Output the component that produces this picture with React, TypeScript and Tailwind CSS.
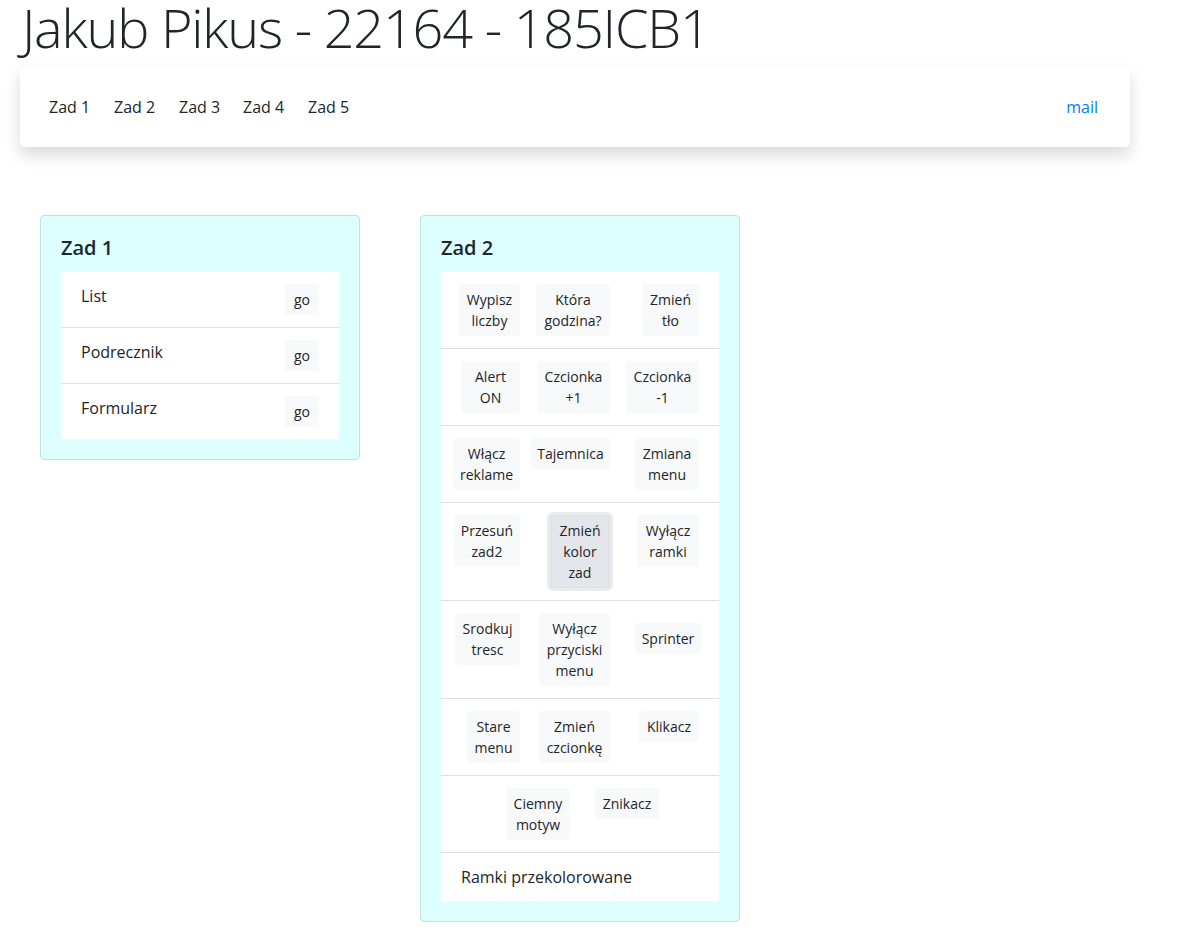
import React from "react";

const FONT = { fontFamily: '"Open Sans", "Liberation Sans", sans-serif' };

type BtnProps = { lines: string[]; className?: string; active?: boolean };

function Btn({ lines, className = "", active = false }: BtnProps) {
  const base =
    "flex flex-col items-center rounded-[3px] border py-1 text-[14px] leading-[21px] text-[#212529] whitespace-nowrap";
  const look = active
    ? "bg-[#e2e6ea] border-[#dae0e5] shadow-[0_0_0_3px_rgba(216,217,219,0.5)]"
    : "bg-[#f8f9fa] border-[#f8f9fa]";
  return (
    <button type="button" className={`${base} ${look} ${className}`}>
      {lines.map((l, i) => (
        <span key={i} className="block">
          {l}
        </span>
      ))}
    </button>
  );
}

function Row3({ a, b, c }: { a: React.ReactNode; b: React.ReactNode; c: React.ReactNode }) {
  return (
    <div className="flex items-start py-3 pr-5">
      <div className="flex w-[79px] shrink-0 justify-end">{a}</div>
      <div className="flex w-[90px] shrink-0 justify-end">{b}</div>
      <div className="flex w-[89px] shrink-0 justify-end">{c}</div>
    </div>
  );
}

function Card({ title, children }: { title: string; children: React.ReactNode }) {
  return (
    <div className="w-[320px] rounded-[4px] border border-[#c3e0e0] bg-[#ddffff] p-5">
      <h5 className="mb-3 text-[20px] font-semibold leading-6 text-[#212529]">{title}</h5>
      <div className="divide-y divide-[#dfdfdf] bg-white">{children}</div>
    </div>
  );
}

export default function App() {
  const zad1 = ["List", "Podrecznik", "Formularz"];
  return (
    <div className="min-h-[931px] bg-white text-[#212529]" style={FONT}>
      <div className="px-[20px]">
        <h1 className="mb-[13px] pl-[2px] text-[54px] font-light leading-[54px] tracking-[-1.2px] text-[#212529]">
          Jakub Pikus - 22164 - 185ICB1
        </h1>
        <nav className="flex h-[80px] w-[1110px] items-center justify-between rounded-[5px] bg-white pl-[29px] pr-[32px] shadow-[0_8px_16px_rgba(0,0,0,0.15)]">
          <div className="flex items-center text-[16px] text-[#212529]">
            <span className="w-[65px]">Zad 1</span>
            <span className="w-[65px]">Zad 2</span>
            <span className="w-[64px]">Zad 3</span>
            <span className="w-[65px]">Zad 4</span>
            <span className="w-[65px]">Zad 5</span>
          </div>
          <span className="text-[16px] text-[#007bff]">mail</span>
        </nav>
      </div>

      <div className="ml-[40px] mt-[68px] flex items-start gap-[60px]">
        <Card title="Zad 1">
          {zad1.map((t) => (
            <div key={t} className="flex items-start justify-between px-5 py-3">
              <span className="text-[16px] leading-6">{t}</span>
              <Btn lines={["go"]} className="w-[34px]" />
            </div>
          ))}
        </Card>

        <Card title="Zad 2">
          <Row3
            a={<Btn lines={["Wypisz", "liczby"]} className="w-[61px]" />}
            b={<Btn lines={["Która", "godzina?"]} className="w-[74px]" />}
            c={<Btn lines={["Zmień", "tło"]} className="w-[57px]" />}
          />
          <Row3
            a={<Btn lines={["Alert", "ON"]} className="w-[59px]" />}
            b={<Btn lines={["Czcionka", "+1"]} className="w-[73px]" />}
            c={<Btn lines={["Czcionka", "-1"]} className="w-[73px]" />}
          />
          <Row3
            a={<Btn lines={["Włącz", "reklame"]} className="w-[67px]" />}
            b={<Btn lines={["Tajemnica"]} className="w-[79px]" />}
            c={<Btn lines={["Zmiana", "menu"]} className="w-[64px]" />}
          />
          <Row3
            a={<Btn lines={["Przesuń", "zad2"]} className="w-[66px]" />}
            b={<Btn lines={["Zmień", "kolor", "zad"]} className="w-[60px]" active />}
            c={<Btn lines={["Wyłącz", "ramki"]} className="w-[62px]" />}
          />
          <Row3
            a={<Btn lines={["Srodkuj", "tresc"]} className="w-[65px]" />}
            b={<Btn lines={["Wyłącz", "przyciski", "menu"]} className="w-[71px]" />}
            c={<Btn lines={["Sprinter"]} className="-mr-[2px] mt-[10px] w-[66px]" />}
          />
          <Row3
            a={<Btn lines={["Stare", "menu"]} className="w-[53px]" />}
            b={<Btn lines={["Zmień", "czcionkę"]} className="w-[71px]" />}
            c={<Btn lines={["Klikacz"]} className="w-[60px]" />}
          />
          <div className="flex items-start gap-[25px] py-3 pl-[65px]">
            <Btn lines={["Ciemny", "motyw"]} className="w-[64px]" />
            <Btn lines={["Znikacz"]} className="w-[64px]" />
          </div>
          <div className="px-5 py-3 text-[16px] leading-6">Ramki przekolorowane</div>
        </Card>
      </div>
    </div>
  );
}
